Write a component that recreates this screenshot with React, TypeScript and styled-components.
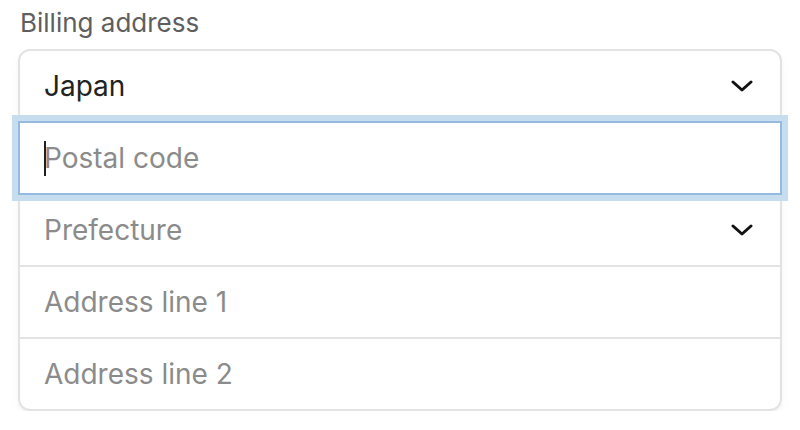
import React from 'react'
import styled, { createGlobalStyle, css } from 'styled-components'

const GlobalStyle = createGlobalStyle`
  html, body {
    margin: 0;
    padding: 0;
    background: #ffffff;
  }
  body {
    font-family: Inter, "Noto Sans", "Liberation Sans", sans-serif;
  }
`

const Page = styled.div`
  padding: 7px 18px 0 18px;
  width: 764px;
`

const Label = styled.div`
  font-size: 26px;
  line-height: 32px;
  color: #5e5e5e;
  padding-left: 2px;
  margin-bottom: 10px;
`

const Group = styled.div`
  display: flex;
  flex-direction: column;
  border-radius: 12px;
  box-shadow: 0 2px 2px rgba(0, 0, 0, 0.03), 0 6px 12px rgba(0, 0, 0, 0.03);
`

const Row = styled.div<{ $focused?: boolean }>`
  position: relative;
  display: flex;
  align-items: center;
  height: 70px;
  border: 2px solid #e3e3e3;
  margin-top: -2px;
  background: #ffffff;
  padding: 0 27px 0 24px;

  &:first-child {
    margin-top: 0;
    border-radius: 12px 12px 0 0;
  }
  &:last-child {
    border-radius: 0 0 12px 12px;
  }

  ${(p) =>
    p.$focused &&
    css`
      z-index: 1;
      border-color: #95bbe0;
      box-shadow: 0 0 0 6px #c6dcef;
    `}
`

const Input = styled.input`
  flex: 1;
  border: none;
  outline: none;
  background: transparent;
  padding: 0;
  font-family: inherit;
  font-size: 28px;
  color: #1f1f1f;
  caret-color: transparent;

  &::placeholder {
    color: #8b8b8b;
    opacity: 1;
  }
`

const Value = styled.span<{ $placeholder?: boolean }>`
  flex: 1;
  font-size: 28px;
  color: ${(p) => (p.$placeholder ? '#8b8b8b' : '#222222')};
`

const Caret = styled.span`
  position: absolute;
  left: 24px;
  top: 18px;
  width: 2px;
  height: 35px;
  background: #1f1f1f;
`

const Chevron = () => (
  <svg width="22" height="14" viewBox="0 0 22 14" fill="none">
    <polyline
      points="2,3 11,11 20,3"
      stroke="#111111"
      strokeWidth="3"
      strokeLinecap="round"
      strokeLinejoin="round"
    />
  </svg>
)

function SelectRow({ value, placeholder }: { value?: string; placeholder?: string }) {
  return (
    <Row>
      <Value $placeholder={!value}>{value || placeholder}</Value>
      <Chevron />
    </Row>
  )
}

function InputRow({ placeholder, focused }: { placeholder: string; focused?: boolean }) {
  return (
    <Row $focused={focused}>
      {focused && <Caret />}
      <Input placeholder={placeholder} readOnly />
    </Row>
  )
}

export default function App() {
  return (
    <>
      <GlobalStyle />
      <Page>
        <Label>Billing address</Label>
        <Group>
          <SelectRow value="Japan" />
          <InputRow placeholder="Postal code" focused />
          <SelectRow placeholder="Prefecture" />
          <InputRow placeholder="Address line 1" />
          <InputRow placeholder="Address line 2" />
        </Group>
      </Page>
    </>
  )
}
